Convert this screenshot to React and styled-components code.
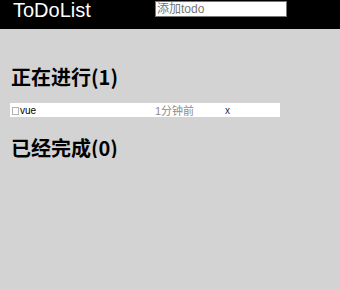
import React from 'react';
import styled, { createGlobalStyle } from 'styled-components';

const GlobalStyle = createGlobalStyle`
  html, body {
    margin: 0;
    padding: 0;
    background: #d3d3d3;
    font-family: 'Liberation Sans', 'Noto Sans CJK SC', sans-serif;
  }
`;

const Header = styled.header`
  height: 29px;
  background: #000;
  display: flex;
  align-items: flex-start;
`;

const Title = styled.h1`
  margin: 0;
  width: 142px;
  padding-left: 13px;
  font-size: 20px;
  line-height: 21px;
  font-weight: normal;
  color: #fff;
`;

const AddInput = styled.input`
  box-sizing: border-box;
  margin-top: 1px;
  width: 132px;
  height: 16px;
  padding: 0 0 0 1px;
  border: 1px solid #767676;
  background: #fff;
  font-family: 'Liberation Sans', 'Noto Sans CJK SC', sans-serif;
  font-size: 12px;
  outline: none;

  &::placeholder {
    color: #757575;
  }
`;

const Main = styled.main`
  padding: 0 10px;
`;

const SectionTitle = styled.h2`
  margin: ${props => props.$top}px 0 0 1px;
  height: ${props => props.$height}px;
  font-family: 'Noto Sans CJK SC', sans-serif;
  font-size: 20px;
  line-height: 20px;
  font-weight: bold;
  color: #000;
`;

const List = styled.ul`
  list-style: none;
  margin: 0;
  padding: 0;
`;

const Item = styled.li`
  display: flex;
  align-items: center;
  width: 270px;
  height: 14px;
  background: #fff;
  font-size: 10px;
  color: #000;
`;

const Check = styled.input`
  appearance: none;
  box-sizing: border-box;
  width: 7px;
  height: 8px;
  margin: 1px 1px 0 2px;
  border: 1px solid #b4b4b4;
  background: #fff;
`;

const Name = styled.span`
  width: 135px;
`;

const Time = styled.span`
  width: 70px;
  color: #8c8c8c;
  font-size: 11px;
  font-family: 'Liberation Sans', 'Noto Sans CJK SC', sans-serif;
`;

const Remove = styled.span`
  color: #1a2a5a;
  cursor: pointer;
`;

const todos = [{ id: 1, name: 'vue', time: '1分钟前' }];

export default function App() {
  return (
    <>
      <GlobalStyle />
      <Header>
        <Title>ToDoList</Title>
        <AddInput placeholder="添加todo" />
      </Header>
      <Main>
        <SectionTitle $top={38} $height={36}>正在进行({todos.length})</SectionTitle>
        <List>
          {todos.map(t => (
            <Item key={t.id}>
              <Check type="checkbox" />
              <Name>{t.name}</Name>
              <Time>{t.time}</Time>
              <Remove>x</Remove>
            </Item>
          ))}
        </List>
        <SectionTitle $top={21} $height={20}>已经完成(0)</SectionTitle>
      </Main>
    </>
  );
}
